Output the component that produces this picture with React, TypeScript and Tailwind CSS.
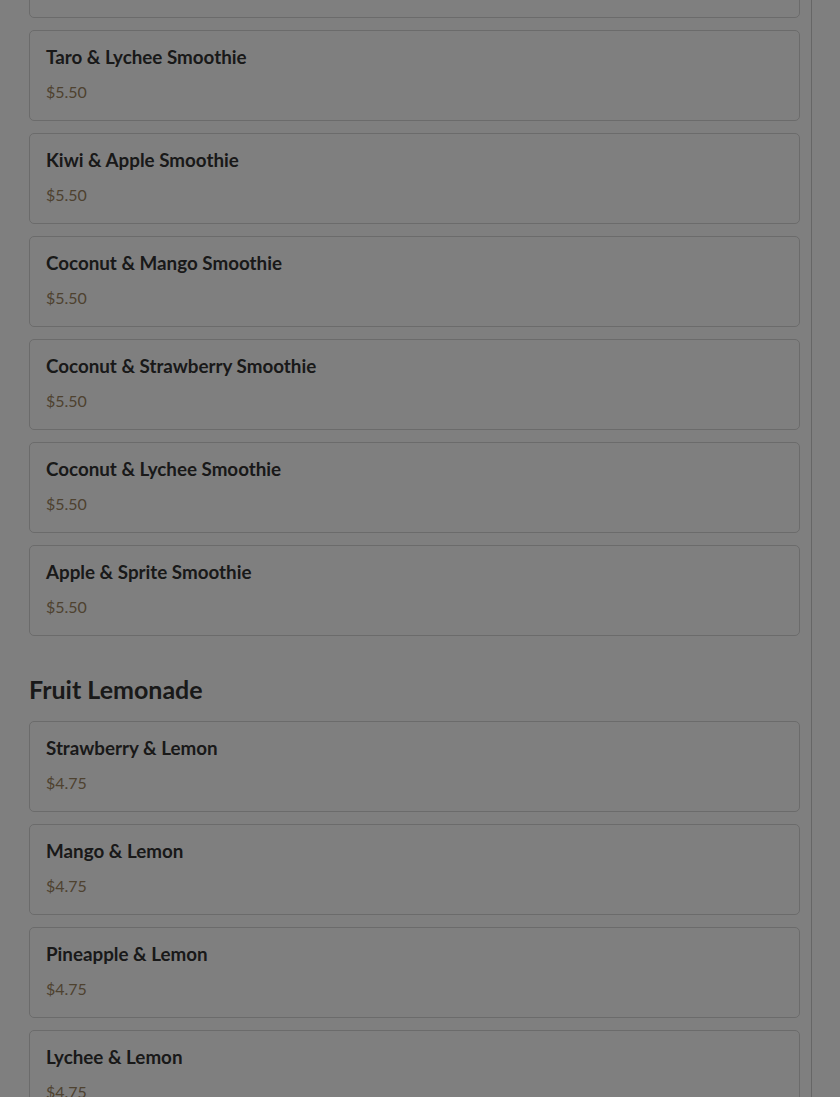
import React from "react";

type Item = { name: string; price: string };

const smoothies: Item[] = [
  { name: "Taro & Mango Smoothie", price: "$5.50" },
  { name: "Taro & Lychee Smoothie", price: "$5.50" },
  { name: "Kiwi & Apple Smoothie", price: "$5.50" },
  { name: "Coconut & Mango Smoothie", price: "$5.50" },
  { name: "Coconut & Strawberry Smoothie", price: "$5.50" },
  { name: "Coconut & Lychee Smoothie", price: "$5.50" },
  { name: "Apple & Sprite Smoothie", price: "$5.50" },
];

const lemonades: Item[] = [
  { name: "Strawberry & Lemon", price: "$4.75" },
  { name: "Mango & Lemon", price: "$4.75" },
  { name: "Pineapple & Lemon", price: "$4.75" },
  { name: "Lychee & Lemon", price: "$4.75" },
  { name: "Passion Fruit & Lemon", price: "$4.75" },
];

function MenuCard({ item }: { item: Item }) {
  return (
    <div className="h-[91px] shrink-0 rounded-[5px] border border-[#d6d6d6] bg-white px-4 pt-[12px]">
      <h3 className="text-[18.8px] leading-[28px] font-bold text-[#333333]">{item.name}</h3>
      <p className="mt-[9px] text-[16px] leading-[23px] text-[#9c8460]">{item.price}</p>
    </div>
  );
}

export default function App() {
  return (
    <div
      className="relative h-[1097px] w-[840px] overflow-hidden bg-white"
      style={{ fontFamily: "Lato, 'Open Sans', sans-serif" }}
    >
      <div className="flex h-full w-[812px] flex-col border-r border-[#cccccc] pl-[29px] pr-[11px]">
        <div className="-mt-[73px] flex shrink-0 flex-col gap-[12px]">
          {smoothies.map((s) => (
            <MenuCard key={s.name} item={s} />
          ))}
        </div>

        {/* Lemonade section */}
        <h2 className="mt-[37px] mb-[16px] shrink-0 text-[25px] leading-[32px] font-bold text-[#333333]">
          Fruit Lemonade
        </h2>
        <div className="flex shrink-0 flex-col gap-[12px]">
          {lemonades.map((s) => (
            <MenuCard key={s.name} item={s} />
          ))}
        </div>
      </div>

      {/* modal backdrop */}
      <div className="absolute inset-0 bg-black/50" />
    </div>
  );
}
